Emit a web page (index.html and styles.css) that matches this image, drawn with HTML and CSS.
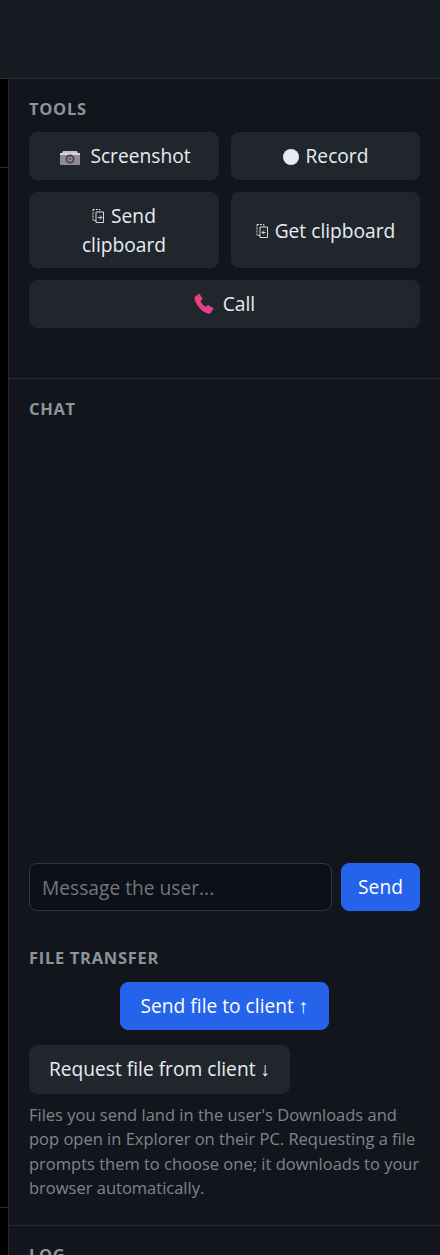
FILE: index.html
```html
<!DOCTYPE html>
<html lang="en">
<head>
<meta charset="utf-8">
<title>Support session</title>
<link rel="stylesheet" href="styles.css">
</head>
<body>
<header class="topbar"></header>
<div class="main">
  <div class="stage"><div class="stage-a"></div><div class="stage-b"></div><div class="stage-c"></div></div>
  <aside class="side">
    <section class="panel tools">
      <h2 class="title">TOOLS</h2>
      <div class="tool-grid">
        <button class="btn"><svg class="ico-cam" viewBox="0 0 20 15"><path fill="#c9c3cc" d="M3 1h14l1 2H2z"/><rect y="3" width="20" height="12" fill="#8f8a96" rx="1"/><rect y="3" width="20" height="2" fill="#d5d3da"/><circle cx="10" cy="9" r="4.500" fill="#4a4552"/><circle cx="10" cy="9" r="2.600" fill="#a08fa8"/><circle cx="10" cy="9" r="1.300" fill="#57505f"/></svg> Screenshot</button>
        <button class="btn"><span class="dot"></span> Record</button>
        <button class="btn tall"><svg class="ico-clip" viewBox="0 0 12 14"><path fill="none" stroke="#d5d8dc" stroke-width="1" stroke-dasharray="2 1" d="M1 .5h7v2.500M1 .5v11h3"/><path fill="none" stroke="#d5d8dc" stroke-width="1" d="M4 3h7.500v10.500H4zM6 8.500h3.500M8 6.500l2 2-2 2"/></svg> Send clipboard</button>
        <button class="btn tall"><svg class="ico-clip" viewBox="0 0 12 14"><path fill="none" stroke="#d5d8dc" stroke-width="1" stroke-dasharray="2 1" d="M1 .5h7v2.500M1 .5v11h3"/><path fill="none" stroke="#d5d8dc" stroke-width="1" d="M4 3h7.500v10.500H4zM6 8.500h3.500M8 6.500 6 8.500l2 2"/></svg> Get clipboard</button>
        <button class="btn wide"><svg class="ico-phone" viewBox="0 0 20 20"><defs><linearGradient id="ph" x1="0" y1="0" x2="1" y2="1"><stop offset="0" stop-color="#e8455f"/><stop offset="1" stop-color="#e13da6"/></linearGradient></defs><path fill="url(#ph)" d="M1 3.500 5 .5l3.400 5.300-2.200 1.700c.8 2.400 2.800 4.600 5.200 5.600l1.800-2 5.600 3.600-2.800 4.200c-.4.6-1 .9-1.800.8C7.500 18.500 1.500 11.500.5 5c-.1-.6.100-1.100.5-1.500z"/></svg> Call</button>
      </div>
    </section>
    <section class="panel chat">
      <h2 class="title">CHAT</h2>
      <div class="messages"></div>
      <div class="composer">
        <input class="input" type="text" placeholder="Message the user...">
        <button class="btn primary send">Send</button>
      </div>
      <h2 class="title file-title">FILE TRANSFER</h2>
      <div class="file-actions">
        <button class="btn primary file-send">Send file to client <span class="arrow">↑</span></button>
      </div>
      <button class="btn file-req">Request file from client <span class="arrow">↓</span></button>
      <p class="note">Files you send land in the user's Downloads and pop open in Explorer on their PC. Requesting a file prompts them to choose one; it downloads to your browser automatically.</p>
    </section>
    <section class="panel log">
      <h2 class="title">LOG</h2>
    </section>
  </aside>
</div>
</body>
</html>
```
FILE: styles.css
```css
* { box-sizing: border-box; }
html, body { margin: 0; height: 100%; overflow: hidden; }
body {
  width: 440px;
  height: 1255px;
  background: #12161c;
  color: #e6edf3;
  font-family: "Open Sans", "Noto Sans", sans-serif;
  display: flex;
  flex-direction: column;
}
.topbar {
  height: 79px;
  flex: none;
  background: #161b22;
  border-bottom: 1px solid #2a2f36;
}
.main { flex: 1; display: flex; min-height: 0; }
.stage { width: 8px; flex: none; background: #000; display: flex; flex-direction: column; }
.stage-a { height: 89px; border-bottom: 1px solid #2a2f36; }
.stage-b { height: 1040px; border-bottom: 1px solid #2a2f36; }
.stage-c { flex: 1; }
.side {
  flex: 1;
  min-width: 0;
  background: #12161c;
  border-left: 1px solid #22272e;
  display: flex;
  flex-direction: column;
}
.panel { padding: 19px 20px 0; flex: none; }
.tools { height: 300px; border-bottom: 1px solid #262b32; }
.chat { height: 847px; border-bottom: 1px solid #262b32; display: flex; flex-direction: column; }
.title {
  margin: 0;
  font-size: 16.500px;
  line-height: 21px;
  font-weight: 700;
  letter-spacing: 0.7px;
  color: #8b939c;
}
.tool-grid {
  margin-top: 13px;
  display: grid;
  grid-template-columns: 190px 189px;
  gap: 12px;
}
.btn {
  font-family: inherit;
  font-size: 19.200px;
  line-height: 28px;
  color: #e6edf3;
  background: #21262d;
  border: 1px solid #22272e;
  border-radius: 8px;
  padding: 9px 19px;
  min-height: 48px;
  text-align: center;
}
.wide { grid-column: 1 / 3; }
.tall { min-height: 76px; padding: 8px 20px; line-height: 29px; }
.ico-cam { width: 20px; height: 15px; vertical-align: -2px; margin: 0 5px 0 3px; }
.ico-clip { width: 12px; height: 14px; vertical-align: 0; margin-right: 2px; }
.ico-phone { width: 21px; height: 21px; vertical-align: -3px; margin-right: 3px; }
.dot {
  display: inline-block;
  width: 16px;
  height: 16px;
  background: #e6ecf5;
  border-radius: 50%;
  vertical-align: -2px;
  margin-right: 2px;
}
.messages { height: 444px; flex: none; }
.composer { display: flex; gap: 9px; }
.input {
  flex: 1;
  min-width: 0;
  height: 48px;
  background: #0d1117;
  border: 1px solid #30363d;
  border-radius: 8px;
  padding: 0 12px;
  font-family: inherit;
  font-size: 19.200px;
  color: #e6edf3;
}
.input::placeholder { color: #6e7681; opacity: 1; }
.primary { background: #2563eb; border-color: #2563eb; color: #fff; }
.send { width: 79px; padding: 9px 0; flex: none; }
.file-title { margin-top: 36px; }
.file-actions { display: flex; justify-content: center; margin-top: 14px; }
.file-send { width: 209px; height: 48px; padding: 0; white-space: nowrap; }
.file-req { margin-top: 15px; width: 261px; padding: 9px 0; white-space: nowrap; align-self: flex-start; }
.arrow { font-family: "Liberation Sans", sans-serif; }
.note {
  margin: 9px 0 0;
  font-size: 16.500px;
  line-height: 24.300px;
  color: #7d8590;
}
.log { padding-top: 18px; }
```
